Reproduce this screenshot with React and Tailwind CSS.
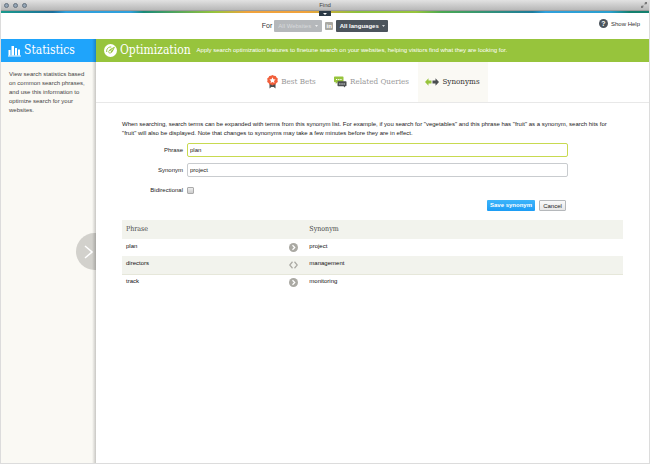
import React, { useState } from 'react';

const tabs = [
  { name: 'Best Bets', icon: BadgeIcon, width: 'w-[68px]' },
  { name: 'Related Queries', icon: ChatIcon, width: 'w-[92px]' },
  { name: 'Synonyms', icon: ArrowsIcon, width: 'w-[70px]' }
];

const synonyms = [
  { phrase: 'plan', synonym: 'project', bidirectional: false },
  { phrase: 'directors', synonym: 'management', bidirectional: true },
  { phrase: 'track', synonym: 'monitoring', bidirectional: false }
];

function BarsIcon() {
  return (
    <svg viewBox="0 0 26 24" className="w-[13px] h-3 shrink-0" fill="#fff">
      <rect x="1" y="10" width="4" height="11" />
      <rect x="7" y="2" width="5" height="19" />
      <rect x="14" y="6" width="4" height="15" />
      <rect x="20" y="9" width="4" height="12" />
      <rect x="0" y="21" width="26" height="2" />
    </svg>
  );
}

function GaugeIcon() {
  return (
    <svg viewBox="0 0 26 26" className="w-[13px] h-[13px] shrink-0" fill="none">
      <circle cx="13" cy="13" r="13" fill="#fff" />
      <path d="M5.500 16C4.500 9.500 9 5.500 14.500 6" stroke="#97c43c" strokeWidth="2" />
      <path d="M9 16.500C8 12 14 8.500 22 5.500C19.500 11 16.500 19.500 11.500 19C10 18.800 9.300 17.800 9 16.500Z" fill="#97c43c" />
      <path d="M12 15.500L18 9" stroke="#fff" strokeWidth="1.500" />
      <circle cx="12" cy="15.500" r="1.800" fill="#fff" />
    </svg>
  );
}

function BadgeIcon() {
  return (
    <svg viewBox="0 0 22 28" className="w-[11px] h-[14px] shrink-0">
      <path d="M5 17h12v10l-3.500-3h-5L5 27z" fill="#4b4f50" />
      <path d="M11 0l3 1.600 3.400.2 1.600 3 2.600 2.200-.6 3.400.6 3.400-2.800 2.200-1.600 3-3.400.2L11 21l-2.800-1.800-3.400-.2-1.600-3L.4 13.800 1 10.400.4 7 3 4.800l1.600-3L8 1.600z" fill="#f15f3b" />
      <path d="M11 4.500l1.900 3.900 4.300.5-3.200 2.900.9 4.200-3.900-2.100L7.100 16l.9-4.200-3.200-2.900 4.300-.5z" fill="#fff" />
    </svg>
  );
}

function ChatIcon() {
  return (
    <svg viewBox="0 0 26 24" className="w-[13px] h-3 shrink-0">
      <path d="M1.500 1h16a1.500 1.500 0 0 1 1.500 1.500V11a1.500 1.500 0 0 1-1.500 1.500H7L3.500 16v-3.500h-2A1.500 1.500 0 0 1 0 11V2.500A1.500 1.500 0 0 1 1.500 1z" fill="#97c43c" />
      <path d="M8.500 10.500h15A1.500 1.500 0 0 1 25 12v7a1.500 1.500 0 0 1-1.500 1.500H22V23l-3-2.500H8.500A1.500 1.500 0 0 1 7 19v-7a1.500 1.500 0 0 1 1.500-1.500z" fill="#4b4f50" />
      <path d="M4 6h2.500v2H4zM8.300 6h2.500v2H8.300zM12.600 6h2.500v2h-2.500zM10.500 15H13v2h-2.500zM14.800 15h2.500v2h-2.500zM19 15h2.500v2H19z" fill="#fff" />
    </svg>
  );
}

function ArrowsIcon() {
  return (
    <svg viewBox="0 0 28 16" className="w-[14px] h-2 shrink-0">
      <path d="M0 8l7-7.500V5h6v6H7v4.500z" fill="#97c43c" />
      <path d="M28 8l-7-7.500V5h-6v6h6v4.500z" fill="#4b4f50" />
    </svg>
  );
}

function OneWayIcon() {
  return (
    <svg viewBox="0 0 18 18" className="w-[9px] h-[9px]" fill="none">
      <circle cx="9" cy="9" r="9" fill="#aaa9a3" />
      <path d="M7 4.500L11.500 9L7 13.500" stroke="#fff" strokeWidth="2.400" />
    </svg>
  );
}

function BothWaysIcon() {
  return (
    <svg viewBox="0 0 18 16" className="w-[9px] h-2" fill="none" stroke="#aaa9a3" strokeWidth="2.400">
      <path d="M7 1.500L1.500 8L7 14.500M11 1.500L16.500 8L11 14.500" />
    </svg>
  );
}

function TitleBar() {
  return (
    <div className="relative h-[11px] flex items-center bg-linear-to-b from-[#e2e2e2] to-[#b8b8b8] border-b border-[#9b9b9b]">
      <div className="flex gap-[4px] pl-[3px]">
        {['Close', 'Minimize', 'Zoom'].map((name) => (
          <button
            key={name}
            type="button"
            aria-label={name}
            className="w-[5px] h-[5px] rounded-full bg-[#93a5b6] border border-[#66727e]"
          ></button>
        ))}
      </div>
      <h1 className="flex-1 pr-[26px] text-center text-[6px] leading-[10px] text-[#444]">Find</h1>
      <svg viewBox="0 0 12 12" className="absolute right-[2px] top-[2px] w-[6px] h-[6px]" fill="#777">
        <path d="M7 0h5v5l-1.700-1.700L8 5.600 6.400 4l2.300-2.300zM5 12H0V7l1.700 1.700L4 6.400 5.600 8l-2.300 2.300z" />
      </svg>
    </div>
  );
}

function ScopeBar() {
  return (
    <div className="relative h-[26px] flex items-center text-[6px] leading-[8px]">
      <button
        type="button"
        aria-label="Open menu"
        className="absolute top-[-2px] left-1/2 -translate-x-1/2 w-3 h-[5px] bg-[#2c3a46] flex items-center justify-center"
      >
        <svg viewBox="0 0 4 2" className="w-1 h-[2px]" fill="#fff"><path d="M0 0h4L2 2z" /></svg>
      </button>
      <div className="flex-1 flex items-center justify-center">
        <span className="text-[7px] text-[#333]">For</span>
        <button type="button" disabled className="ml-[2px] w-12 h-3 rounded-[1px] bg-[#b5b8bb] text-[#d8dadc] flex items-center justify-center gap-1">
          All Websites
          <svg viewBox="0 0 4 2" className="w-[3px] h-[2px]" fill="#fff"><path d="M0 0h4L2 2z" /></svg>
        </button>
        <span className="ml-[3px] w-2 h-2 rounded-[1px] bg-[#aaa9a3] text-white font-bold text-center">in</span>
        <button type="button" className="ml-[3px] w-[52px] h-3 rounded-[1px] bg-[#4c545c] text-white font-bold flex items-center justify-center gap-[3px]">
          All languages
          <svg viewBox="0 0 4 2" className="w-[3px] h-[2px]" fill="#fff"><path d="M0 0h4L2 2z" /></svg>
        </button>
      </div>
      <a href="#help" className="absolute right-[9px] top-[6px] flex items-center gap-[3px] text-[#333]">
        <span className="w-[9px] h-[9px] rounded-full bg-[#4c545c] text-white font-bold text-[7px] leading-[9px] text-center">?</span>
        Show Help
      </a>
    </div>
  );
}

function Sidebar() {
  return (
    <aside className="relative w-[95px] shrink-0 bg-[#faf9f4] overflow-hidden">
      <div className="h-[23px] flex items-center gap-[3px] pl-[7px] bg-[#1fa4fb] text-white">
        <BarsIcon />
        <h2 className="font-['DejaVu_Serif_Condensed','DejaVu_Serif',serif] text-[12px] leading-[23px]">Statistics</h2>
      </div>
      <p className="pt-[8px] pl-[8px] text-[6px] leading-[9px] text-[#444] whitespace-nowrap">
        View search statistics based<br />
        on common search phrases,<br />
        and use this information to<br />
        optimize search for your<br />
        websites.
      </p>
      <button
        type="button"
        aria-label="Show statistics"
        className="absolute top-[194px] -right-[17px] w-[37px] h-[37px] rounded-full bg-[#d2d1cc] flex items-center pl-2"
      >
        <svg viewBox="0 0 9 14" className="w-[9px] h-[14px]" fill="none" stroke="#fff" strokeWidth="1.500">
          <path d="M1 1l7 6-7 6" />
        </svg>
      </button>
      <div className="absolute inset-y-0 right-0 w-1 bg-linear-to-r from-transparent to-black/20"></div>
    </aside>
  );
}

function SynonymForm() {
  const [phrase, setPhrase] = useState('plan');
  const [synonym, setSynonym] = useState('project');
  const [bidirectional, setBidirectional] = useState(false);

  return (
    <form onSubmit={(e) => e.preventDefault()} className="pt-[5px] pr-[55px] text-[#222]">
      <div className="flex items-center mb-[6px]">
        <label htmlFor="phrase" className="w-[61px] mr-1 text-right">Phrase</label>
        <input
          id="phrase"
          type="text"
          autoFocus
          value={phrase}
          onChange={(e) => setPhrase(e.target.value)}
          className="flex-1 h-[14px] px-[2px] bg-white border border-[#c8da50] rounded-[2px] outline-none"
        />
      </div>
      <div className="flex items-center mb-[6px]">
        <label htmlFor="synonym" className="w-[61px] mr-1 text-right">Synonym</label>
        <input
          id="synonym"
          type="text"
          value={synonym}
          onChange={(e) => setSynonym(e.target.value)}
          className="flex-1 h-[14px] px-[2px] bg-white border border-[#c9cccf] rounded-[2px] outline-none"
        />
      </div>
      <div className="flex items-center h-[14px]">
        <label htmlFor="bidirectional" className="w-[61px] mr-1 text-right">Bidirectional</label>
        <input
          id="bidirectional"
          type="checkbox"
          checked={bidirectional}
          onChange={(e) => setBidirectional(e.target.checked)}
          className="appearance-none w-[7px] h-[7px] rounded-[1px] border border-[#aaa] bg-linear-to-b from-[#eee] to-[#ccc] checked:bg-[#1fa4fb]"
        />
      </div>
      <div className="flex justify-end gap-1 pt-[3px] pr-[2px]">
        <button type="submit" className="w-12 h-[11px] rounded-[1px] bg-linear-to-b from-[#3cb4fa] to-[#1c9df5] text-white font-bold">
          Save synonym
        </button>
        <button type="button" className="w-[27px] h-[11px] leading-[8px] rounded-[1px] border border-[#b5b8bb] bg-linear-to-b from-[#fafafa] to-[#e6e6e6]">
          Cancel
        </button>
      </div>
    </form>
  );
}

function SynonymTable() {
  return (
    <table className="w-full mt-[9px] text-left text-[#111] table-fixed">
      <thead>
        <tr className="h-[19px] bg-[#f2f3ed] font-['DejaVu_Serif_Condensed','DejaVu_Serif',serif] text-[7px] text-[#444]">
          <th className="w-[33%] pl-1 font-normal">Phrase</th>
          <th className="w-[4%]"></th>
          <th className="pl-[2px] font-normal">Synonym</th>
        </tr>
      </thead>
      <tbody>
        {synonyms.map((row) => (
          <tr key={row.phrase} className="h-[17px] even:h-[18px] even:bg-[#f2f3ed] even:border-b even:border-[#e6e7da]">
            <td className="pl-1 pb-[2px]">{row.phrase}</td>
            <td className="pl-[2px]">{row.bidirectional ? <BothWaysIcon /> : <OneWayIcon />}</td>
            <td className="pl-[2px] pb-[2px]">{row.synonym}</td>
          </tr>
        ))}
      </tbody>
    </table>
  );
}

function App() {
  const [activeTab, setActiveTab] = useState('Synonyms');

  return (
    <div className="min-h-screen flex flex-col bg-white border-x border-b border-[#dcdcdc] font-['Liberation_Sans',Arial,sans-serif]">
      <TitleBar />
      <div className="h-[2px] bg-[linear-gradient(90deg,#1a9a8c_0%,#1c6f9c_8%,#2fa0dc_10%,#2fa0dc_20%,#1a8a78_22%,#97c43c_33%,#f0a23c_38%,#f0a23c_47%,#8cc03c_55%,#97c43c_64%,#4aa852_68%,#1d7c9c_82%,#2fa0dc_84%,#2a9fce_94%,#14806e_97%)]"></div>
      <ScopeBar />
      <div className="flex-1 flex">
        <Sidebar />
        <main className="flex-1">
          <div className="h-[23px] flex items-center pl-2 bg-[#97c43c] text-white">
            <GaugeIcon />
            <h2 className="ml-[3px] font-['DejaVu_Serif_Condensed','DejaVu_Serif',serif] text-[12px] leading-[23px]">Optimization</h2>
            <p className="ml-[6px] text-[6px]">
              Apply search optimization features to finetune search on your websites, helping visitors find what they are looking for.
            </p>
          </div>
          <nav className="h-[41px] flex justify-center border-b border-[#e8e8e8] font-['DejaVu_Serif_Condensed','DejaVu_Serif',serif] text-[8px]">
            {tabs.map((tab) => (
              <button
                key={tab.name}
                type="button"
                onClick={() => setActiveTab(tab.name)}
                className={`${tab.width} flex items-center justify-center gap-[3px] whitespace-nowrap ${
                  activeTab === tab.name ? 'bg-[#faf9f4] text-[#333]' : 'text-[#999]'
                }`}
              >
                <tab.icon />
                {tab.name}
              </button>
            ))}
          </nav>
          <div className="pt-[17px] pl-[26px] pr-[26px] text-[6px] leading-[9px]">
            <p className="text-[#222]">
              When searching, search terms can be expanded with terms from this synonym list. For example, if you search for "vegetables" and this phrase has "fruit" as a synonym, search hits for<br />
              "fruit" will also be displayed. Note that changes to synonyms may take a few minutes before they are in effect.
            </p>
            <SynonymForm />
            <SynonymTable />
          </div>
        </main>
      </div>
    </div>
  );
}

export default App;
